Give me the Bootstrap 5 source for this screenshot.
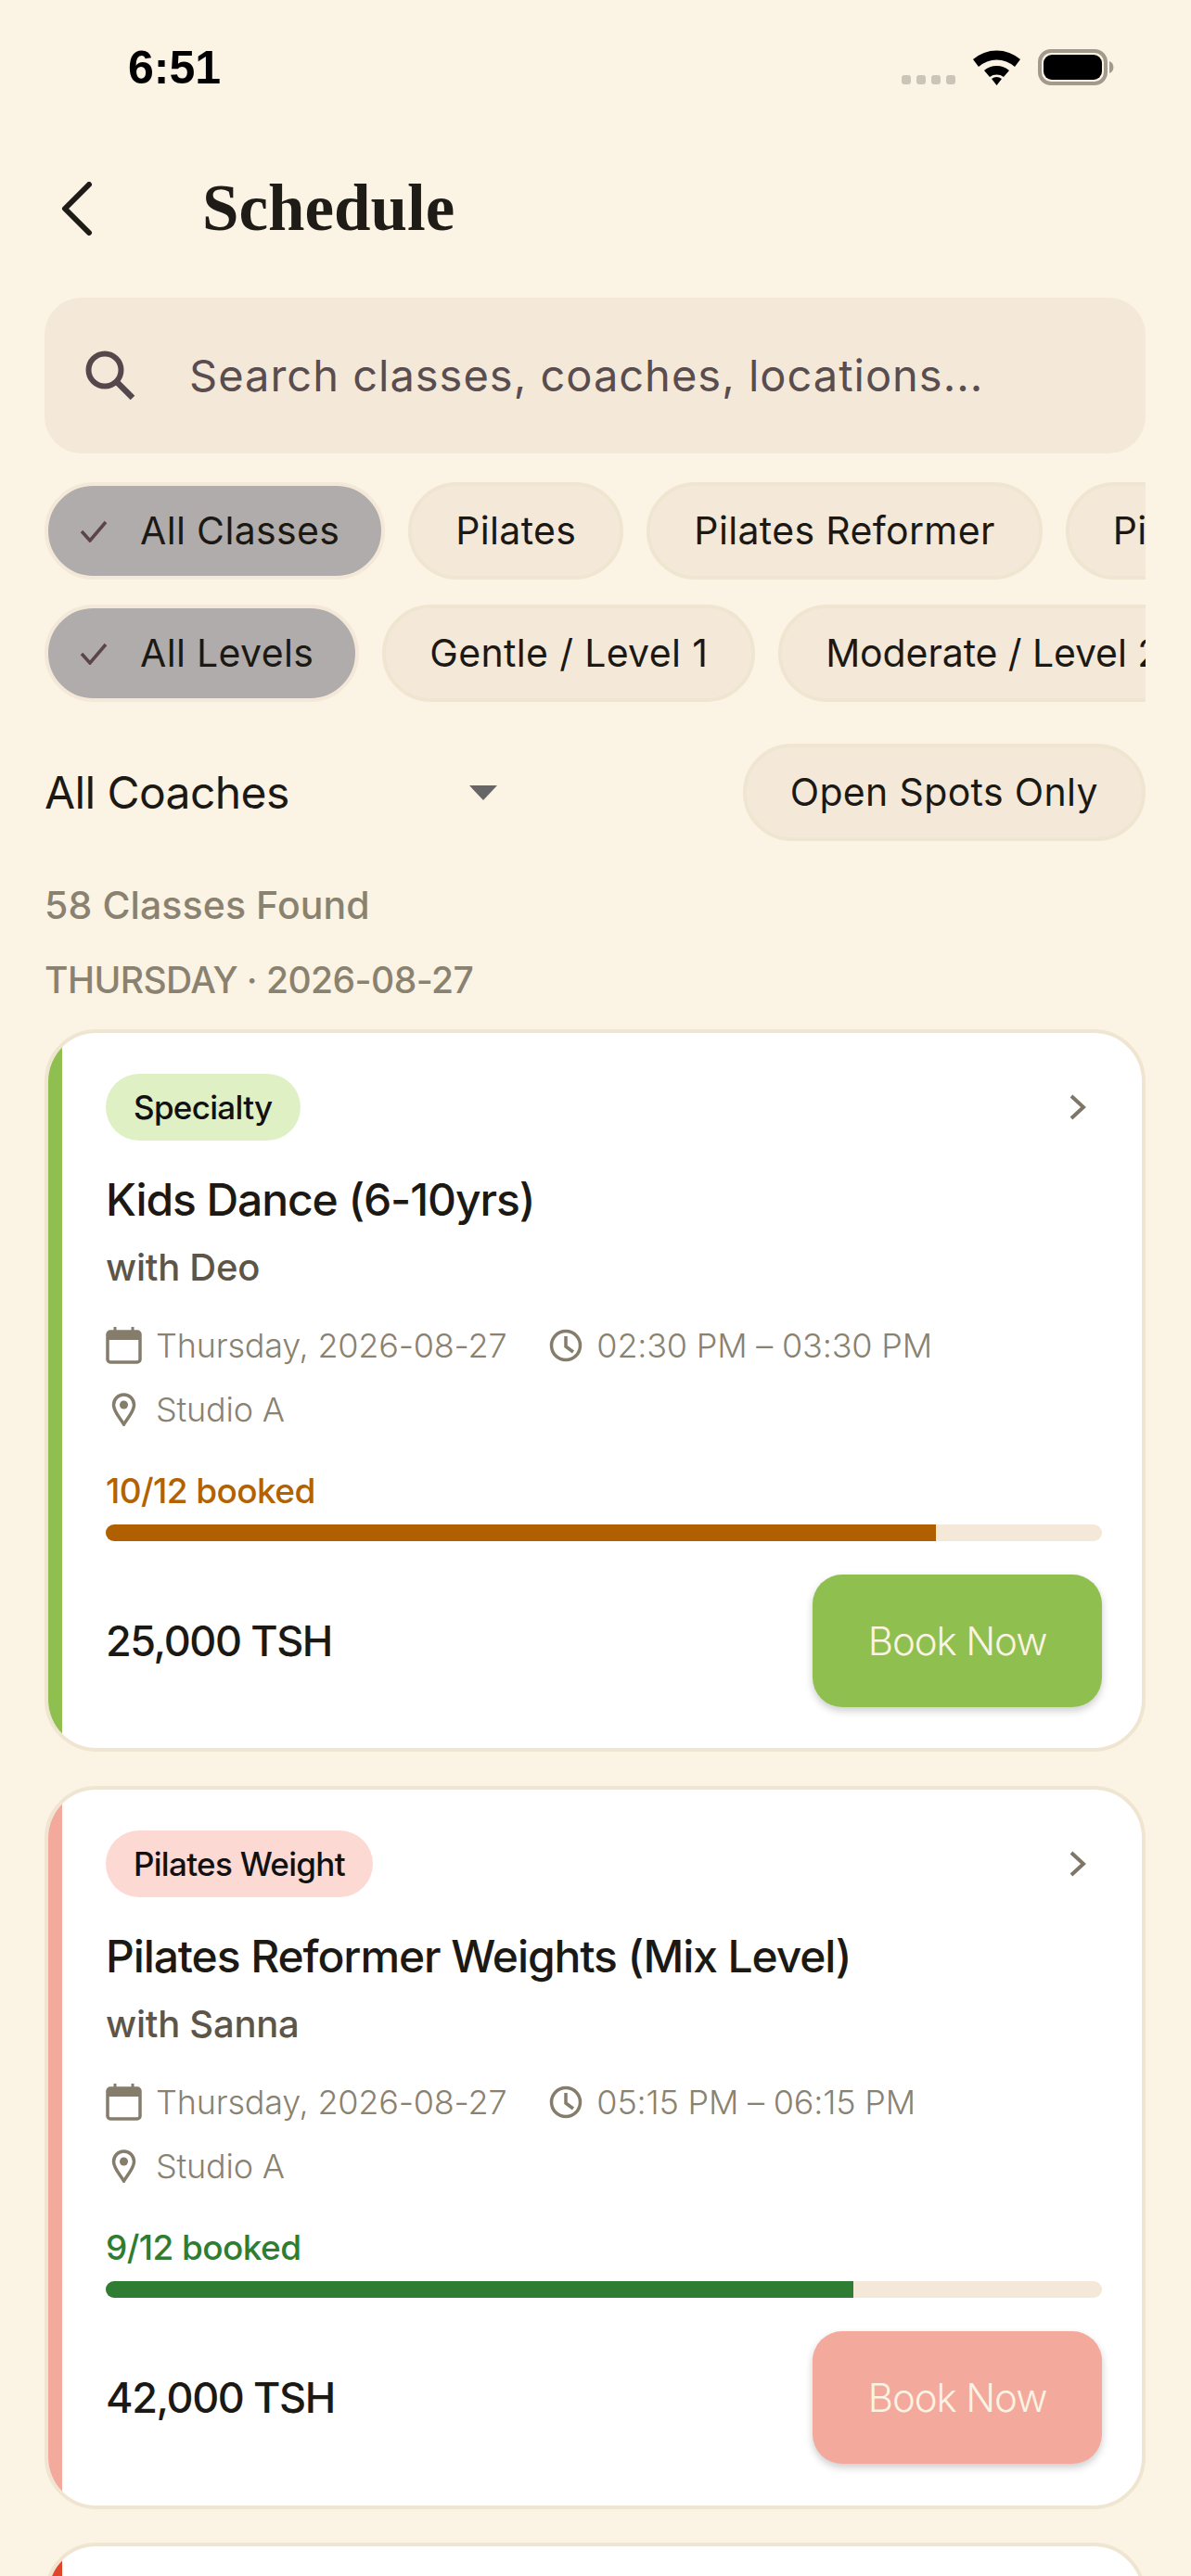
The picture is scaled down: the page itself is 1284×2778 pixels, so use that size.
<!DOCTYPE html>
<html lang="en">
<head>
    <meta charset="UTF-8">
    <title>Schedule</title>
    <link href="https://cdn.jsdelivr.net/npm/bootstrap@5.3.2/dist/css/bootstrap.min.css" rel="stylesheet">
    <style>
        html, body {
            height: 2778px;
            overflow: hidden;
        }
        body {
            background: #fbf3e4;
            font-family: "Inter", "Noto Sans", sans-serif;
            color: #1c1914;
        }
        .status-row {
            height: 144px;
            padding: 2px 82px 0 138px;
        }
        .status-time {
            font-family: "Liberation Sans", sans-serif;
            font-size: 50px;
            font-weight: 700;
            color: #000;
        }
        .page-wrap {
            height: 2634px;
            overflow: hidden;
            padding: 0 49px 0 48px;
        }
        .page-head {
            height: 162px;
            margin-bottom: 15px;
            padding-left: 18px;
            gap: 118px;
        }
        .page-title {
            font-family: "Liberation Serif", serif;
            font-size: 71px;
            font-weight: 700;
            margin: 0;
            color: #1f1b16;
        }
        .search-box {
            height: 168px;
            background: #f4e9d8;
            border-radius: 40px;
            padding-left: 44px;
            gap: 58px;
        }
        .search-text {
            font-size: 47px;
            color: #5a4d50;
            letter-spacing: 1px;
        }
        .chip-row {
            margin-top: 27px;
            gap: 25px;
            overflow: hidden;
        }
        .chip-row.first-row {
            margin-top: 31px;
        }
        .chip {
            height: 105px;
            flex: none;
            padding: 0 47px;
            border: 4px solid #efe5d0;
            background: #f4e9d8;
            color: #1c1914;
            font-size: 41px;
            letter-spacing: .35px;
            gap: 35px;
        }
        .chip.chosen {
            background: #b0acab;
            border-color: #f4e9d8;
            padding-left: 34px;
            padding-right: 45px;
        }
        .chip.chip-tight {
            letter-spacing: -.1px;
        }
        .filter-row {
            margin-top: 45px;
        }
        .coach-select {
            width: 488px;
            font-size: 48px;
            letter-spacing: -.6px;
            color: #1c1914;
        }
        .found-line, .date-line {
            line-height: 58px;
            color: #8a8271;
            font-weight: 500;
        }
        .found-line {
            margin-top: 40px;
            font-size: 41px;
            letter-spacing: .1px;
        }
        .date-line {
            margin-top: 23px;
            font-size: 39px;
            letter-spacing: -.55px;
        }
        .class-card {
            border: 4px solid #efe5d0;
            border-radius: 56px;
            background: #fff;
            margin-top: 24px;
            height: 780px;
            margin-bottom: 36px;
        }
        .date-line + .class-card {
            height: 779px;
            margin-bottom: 37px;
        }
        .class-strip {
            width: 15px;
            flex: none;
        }
        .class-body {
            padding: 44px 43px 44px 47px;
            min-width: 0;
        }
        .class-card + .class-card {
            margin-top: 0;
        }
        .type-tag {
            height: 72px;
            padding: 0 30px;
            font-size: 35px;
            font-weight: 500;
            letter-spacing: -.7px;
            color: #111;
        }
        .class-title {
            margin: 34px 0 0;
            font-size: 48px;
            line-height: 60px;
            font-weight: 500;
            letter-spacing: -1.1px;
            color: #1c1914;
        }
        .class-coach {
            margin-top: 18px;
            font-size: 40px;
            line-height: 50px;
            font-weight: 500;
            letter-spacing: -.25px;
            color: #5d5548;
        }
        .meta-line {
            height: 44px;
            margin-top: 37px;
            font-size: 36px;
            font-weight: 300;
            letter-spacing: -.2px;
            color: #8a8271;
            gap: 15px;
        }
        .meta-line.second {
            margin-top: 25px;
        }
        .meta-gap {
            margin-left: 31px;
        }
        .booked-line {
            margin-top: 44px;
            font-size: 37px;
            line-height: 44px;
            font-weight: 500;
            letter-spacing: -.6px;
        }
        .seat-bar {
            height: 18px;
            margin-top: 14px;
            background: #f4e9d8;
            border-radius: 9px;
        }
        .class-foot {
            margin-top: 36px;
        }
        .class-price {
            font-size: 45px;
            font-weight: 500;
            letter-spacing: -1.4px;
            color: #1c1914;
        }
        .book-btn {
            width: 312px;
            height: 143px;
            border: 0;
            border-radius: 32px;
            font-size: 42px;
            font-weight: 300;
            letter-spacing: -1.1px;
            color: #fbf3e4;
            box-shadow: 0 4px 8px rgba(0, 0, 0, .2);
        }
        .tone-green { background: #8fc04f; }
        .tone-rose { background: #f3a99c; }
        .tone-red { background: #e0472a; }
        .tag-green { background: #dff0c5; }
        .tag-rose { background: #fcd9d3; }
        .fill-amber { background: #b06000; }
        .fill-green { background: #2e7d32; }
        .text-amber { color: #b36200; }
        .text-leaf { color: #2e7d32; }
    </style>
</head>
<body>
<div class="status-row d-flex justify-content-between align-items-center">
    <span class="status-time">6:51</span>
    <svg width="230" height="40" viewBox="0 0 230 40">
        <g fill="#cbc4b8">
            <rect x="0" y="28" width="10" height="10" rx="3"/>
            <rect x="16" y="28" width="10" height="10" rx="3"/>
            <rect x="32" y="28" width="10" height="10" rx="3"/>
            <rect x="48" y="28" width="10" height="10" rx="3"/>
        </g>
        <path d="M77 11 A39 39 0 0 1 128 11 L122 19 A29 29 0 0 0 83 19 Z M89 23 A21 21 0 0 1 116 23 L110 30 A13 13 0 0 0 95 30 Z M97 32 A9 9 0 0 1 108 32 L102.500 39 Z" fill="#000"/>
        <rect x="149" y="2" width="71" height="35" rx="12" fill="none" stroke="#a39a8e" stroke-width="4"/>
        <rect x="153" y="6" width="63" height="27" rx="9" fill="#000"/>
        <path d="M224 13 a7 7 0 0 1 0 13 Z" fill="#a39a8e"/>
    </svg>
</div>

<div class="page-wrap">
    <div class="page-head d-flex align-items-center">
        <svg width="34" height="58" viewBox="0 0 34 58" class="flex-none">
            <path d="M30 3 L4 29 L30 55" fill="none" stroke="#1f1b16" stroke-width="6" stroke-linecap="round" stroke-linejoin="round"/>
        </svg>
        <h1 class="page-title">Schedule</h1>
    </div>

    <div class="search-box d-flex align-items-center">
        <svg width="54" height="54" viewBox="0 0 54 54">
            <circle cx="21" cy="21" r="17.500" fill="none" stroke="#55484c" stroke-width="6"/>
            <path d="M34 34 L51 51" stroke="#55484c" stroke-width="6.500"/>
        </svg>
        <span class="search-text">Search classes, coaches, locations...</span>
    </div>

    <div class="chip-row first-row d-flex">
        <span class="chip chosen rounded-pill d-flex align-items-center">
            <svg width="30" height="24" viewBox="0 0 30 24"><path d="M2 12 L11 22 L28 2" fill="none" stroke="#5c444c" stroke-width="3.500"/></svg>
            All Classes
        </span>
        <span class="chip rounded-pill d-flex align-items-center">Pilates</span>
        <span class="chip rounded-pill d-flex align-items-center">Pilates Reformer</span>
        <span class="chip rounded-pill d-flex align-items-center">Pilates Weight</span>
    </div>
    <div class="chip-row d-flex">
        <span class="chip chosen rounded-pill d-flex align-items-center">
            <svg width="30" height="24" viewBox="0 0 30 24"><path d="M2 12 L11 22 L28 2" fill="none" stroke="#5c444c" stroke-width="3.500"/></svg>
            All Levels
        </span>
        <span class="chip rounded-pill d-flex align-items-center">Gentle / Level 1</span>
        <span class="chip chip-tight rounded-pill d-flex align-items-center">Moderate / Level 2</span>
    </div>

    <div class="filter-row d-flex justify-content-between align-items-center">
        <div class="coach-select d-flex justify-content-between align-items-center">
            All Coaches
            <svg width="30" height="16" viewBox="0 0 30 16"><path d="M0 0 H30 L15 16 Z" fill="#666"/></svg>
        </div>
        <span class="chip rounded-pill d-flex align-items-center">Open Spots Only</span>
    </div>

    <div class="found-line">58 Classes Found</div>
    <div class="date-line">THURSDAY · 2026-08-27</div>

    <div class="card class-card flex-row overflow-hidden">
        <div class="class-strip tone-green"></div>
        <div class="class-body flex-grow-1">
            <div class="d-flex justify-content-between align-items-center">
                <span class="badge type-tag tag-green rounded-pill d-flex align-items-center">Specialty</span>
                <svg class="me-3" width="20" height="28" viewBox="0 0 20 28"><path d="M3 2 L16 14 L3 26" fill="none" stroke="#7f7668" stroke-width="4"/></svg>
            </div>
            <h2 class="class-title">Kids Dance (6-10yrs)</h2>
            <div class="class-coach">with Deo</div>
            <div class="meta-line d-flex align-items-center">
                <svg width="39" height="40" viewBox="0 0 39 40"><path d="M10 0 V6 M29 0 V6" stroke="#857c6c" stroke-width="3"/><rect x="2" y="5" width="35" height="33" rx="3" fill="none" stroke="#857c6c" stroke-width="3.500"/><rect x="2" y="5" width="35" height="9" fill="#857c6c"/></svg>
                <span>Thursday, 2026-08-27</span>
                <svg class="meta-gap" width="36" height="36" viewBox="0 0 36 36"><circle cx="18" cy="18" r="15.500" fill="none" stroke="#857c6c" stroke-width="3.500"/><path d="M18 8 V19 L26 25" fill="none" stroke="#857c6c" stroke-width="3.500"/></svg>
                <span>02:30 PM – 03:30 PM</span>
            </div>
            <div class="meta-line second d-flex align-items-center">
                <svg class="mx-1" width="31" height="36" viewBox="0 0 26 36"><path d="M13 34 C8 26 2 20 2 13 A11 11 0 0 1 24 13 C24 20 18 26 13 34 Z" fill="none" stroke="#857c6c" stroke-width="3.500"/><circle cx="13" cy="13" r="4.500" fill="#857c6c"/></svg>
                <span>Studio A</span>
            </div>
            <div class="booked-line text-amber">10/12 booked</div>
            <div class="progress seat-bar">
                <div class="progress-bar fill-amber" style="width: 83.33%"></div>
            </div>
            <div class="class-foot d-flex justify-content-between align-items-center">
                <span class="class-price">25,000 TSH</span>
                <button class="btn book-btn tone-green">Book Now</button>
            </div>
        </div>
    </div>

    <div class="card class-card flex-row overflow-hidden">
        <div class="class-strip tone-rose"></div>
        <div class="class-body flex-grow-1">
            <div class="d-flex justify-content-between align-items-center">
                <span class="badge type-tag tag-rose rounded-pill d-flex align-items-center">Pilates Weight</span>
                <svg class="me-3" width="20" height="28" viewBox="0 0 20 28"><path d="M3 2 L16 14 L3 26" fill="none" stroke="#7f7668" stroke-width="4"/></svg>
            </div>
            <h2 class="class-title">Pilates Reformer Weights (Mix Level)</h2>
            <div class="class-coach">with Sanna</div>
            <div class="meta-line d-flex align-items-center">
                <svg width="39" height="40" viewBox="0 0 39 40"><path d="M10 0 V6 M29 0 V6" stroke="#857c6c" stroke-width="3"/><rect x="2" y="5" width="35" height="33" rx="3" fill="none" stroke="#857c6c" stroke-width="3.500"/><rect x="2" y="5" width="35" height="9" fill="#857c6c"/></svg>
                <span>Thursday, 2026-08-27</span>
                <svg class="meta-gap" width="36" height="36" viewBox="0 0 36 36"><circle cx="18" cy="18" r="15.500" fill="none" stroke="#857c6c" stroke-width="3.500"/><path d="M18 8 V19 L26 25" fill="none" stroke="#857c6c" stroke-width="3.500"/></svg>
                <span>05:15 PM – 06:15 PM</span>
            </div>
            <div class="meta-line second d-flex align-items-center">
                <svg class="mx-1" width="31" height="36" viewBox="0 0 26 36"><path d="M13 34 C8 26 2 20 2 13 A11 11 0 0 1 24 13 C24 20 18 26 13 34 Z" fill="none" stroke="#857c6c" stroke-width="3.500"/><circle cx="13" cy="13" r="4.500" fill="#857c6c"/></svg>
                <span>Studio A</span>
            </div>
            <div class="booked-line text-leaf">9/12 booked</div>
            <div class="progress seat-bar">
                <div class="progress-bar fill-green" style="width: 75%"></div>
            </div>
            <div class="class-foot d-flex justify-content-between align-items-center">
                <span class="class-price">42,000 TSH</span>
                <button class="btn book-btn tone-rose">Book Now</button>
            </div>
        </div>
    </div>

    <div class="card class-card flex-row overflow-hidden">
        <div class="class-strip tone-red"></div>
        <div class="class-body flex-grow-1"></div>
    </div>
</div>

<script src="https://cdn.jsdelivr.net/npm/bootstrap@5.3.2/dist/js/bootstrap.bundle.min.js"></script>
</body>
</html>
